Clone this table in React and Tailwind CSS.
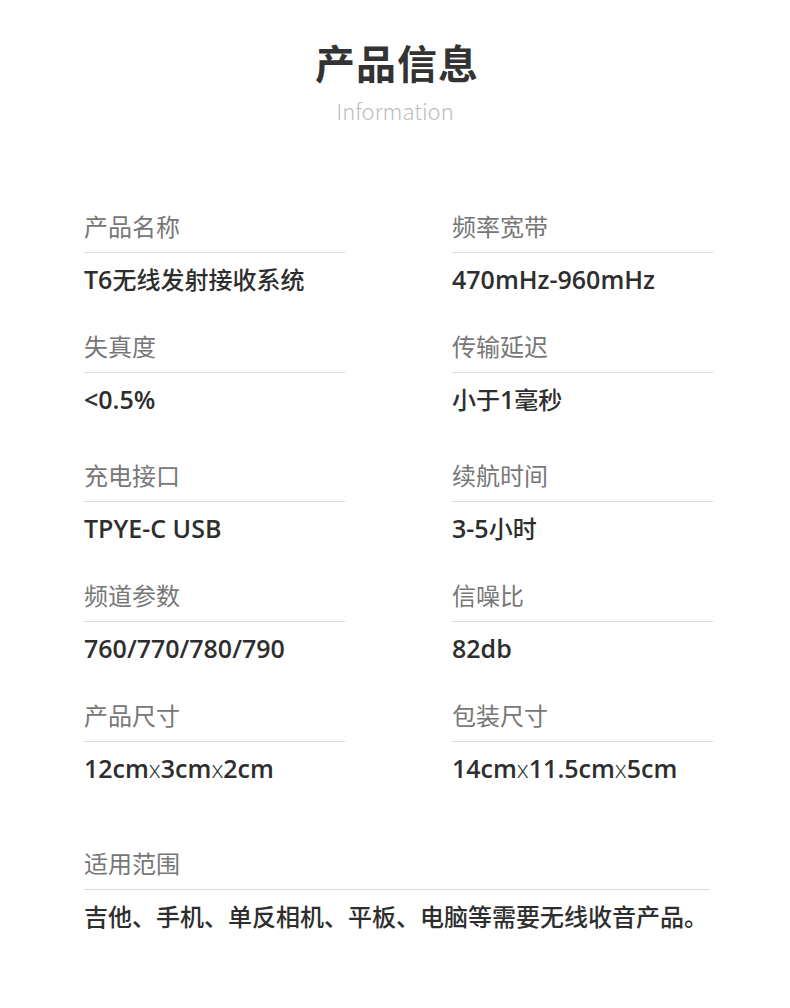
const rows = [
  { gap: "mt-[93px]", items: [["产品名称", "T6无线发射接收系统"], ["频率宽带", "470mHz-960mHz"]] },
  { gap: "mt-[42px]", items: [["失真度", "<0.5%"], ["传输延迟", "小于1毫秒"]] },
  { gap: "mt-[51px]", items: [["充电接口", "TPYE-C USB"], ["续航时间", "3-5小时"]] },
  { gap: "mt-[42px]", items: [["频道参数", "760/770/780/790"], ["信噪比", "82db"]] },
  { gap: "mt-[42px]", items: [["产品尺寸", "12cm×3cm×2cm"], ["包装尺寸", "14cm×11.5cm×5cm"]] },
];

const CJK = /([\u3000-\u9fff\uff00-\uffef]+|×)/;
const latin = { fontFamily: '"Open Sans", sans-serif' };

function Value({ text }) {
  // latin runs in Open Sans, chinese runs in Noto CJK, "x" thinner
  const parts = text.split(CJK).filter(Boolean);
  return (
    <div className="mt-[13px] h-[26px] flex items-baseline text-[#2e2e2e] whitespace-nowrap">
      {parts.map((p, i) => {
        if (p === "×")
          return (
            <span key={i} className="text-[24px] leading-[26px] font-light" style={latin}>
              x
            </span>
          );
        if (CJK.test(p))
          return (
            <span key={i} className="text-[24px] leading-[26px] font-medium">
              {p}
            </span>
          );
        return (
          <span key={i} className="text-[25px] leading-[26px] font-semibold" style={latin}>
            {p}
          </span>
        );
      })}
    </div>
  );
}

function Cell({ label, value, wide }) {
  return (
    <div className={wide ? "w-[626px] shrink-0" : "w-[261px] shrink-0"}>
      <div className="text-[24px] leading-[24px] text-[#777]">{label}</div>
      <div className="mt-[14px] h-px bg-[#dcdcdc]" />
      <Value text={value} />
    </div>
  );
}

export default function App() {
  return (
    <div
      className="w-[790px] h-[1008px] bg-white overflow-hidden"
      style={{ fontFamily: '"Noto Sans CJK SC", "Noto Sans", sans-serif' }}
    >
      <div className="pt-[42px] flex flex-col items-center">
        <h1 className="text-[40px] leading-[40px] font-bold text-[#333] tracking-[1px] pl-[4px]">产品信息</h1>
        <p className="mt-[17px] text-[22px] leading-[22px] font-light text-[#bdbdbd]">Information</p>
      </div>

      <div className="px-[84px]">
        {rows.map((row, i) => (
          <div key={i} className={"flex gap-[107px] " + row.gap}>
            {row.items.map(([l, v]) => (
              <Cell key={l} label={l} value={v} />
            ))}
          </div>
        ))}
        <div className="mt-[70px]">
          <Cell wide label="适用范围" value="吉他、手机、单反相机、平板、电脑等需要无线收音产品。" />
        </div>
      </div>
    </div>
  );
}
